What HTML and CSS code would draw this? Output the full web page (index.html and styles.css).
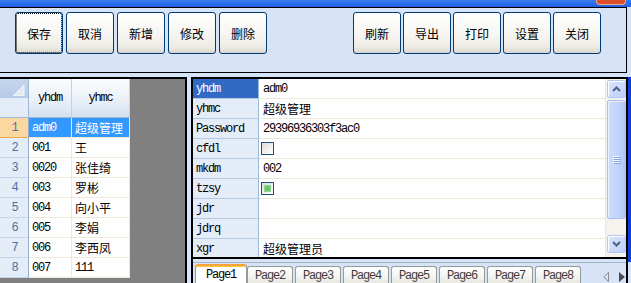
FILE: index.html
```html
<!DOCTYPE html>
<html>
<head>
<meta charset="utf-8">
<link rel="stylesheet" href="styles.css">
</head>
<body>
<div class="title"><div class="close"></div></div>
<div class="toolbar">
  <div class="group">
    <button class="btn focus">保存</button>
    <button class="btn">取消</button>
    <button class="btn">新增</button>
    <button class="btn">修改</button>
    <button class="btn">删除</button>
  </div>
  <div class="group r">
    <button class="btn">刷新</button>
    <button class="btn">导出</button>
    <button class="btn">打印</button>
    <button class="btn">设置</button>
    <button class="btn">关闭</button>
  </div>
</div>
<div class="lower">
  <div class="grid">
    <div class="table">
      <div class="hdr">
        <div class="corner">
          <div class="c1"><svg class="tri" width="12" height="11" viewBox="0 0 12 11"><polygon points="11,0 11,11 0,11" fill="#e3e9f1" stroke="#f4f7fb" stroke-width="1"/></svg></div>
          <div class="c2"></div>
        </div>
        <div class="hcell w1 m">yhdm</div>
        <div class="hcell w2 m">yhmc</div>
      </div>
      <div class="row sel"><div class="rh m">1</div><div class="cell w1 m">adm0</div><div class="cell w2">超级管理</div></div>
      <div class="row"><div class="rh m">2</div><div class="cell w1 m">001</div><div class="cell w2">王</div></div>
      <div class="row"><div class="rh m">3</div><div class="cell w1 m">0020</div><div class="cell w2">张佳绮</div></div>
      <div class="row"><div class="rh m">4</div><div class="cell w1 m">003</div><div class="cell w2">罗彬</div></div>
      <div class="row"><div class="rh m">5</div><div class="cell w1 m">004</div><div class="cell w2">向小平</div></div>
      <div class="row"><div class="rh m">6</div><div class="cell w1 m">005</div><div class="cell w2">李娟</div></div>
      <div class="row"><div class="rh m">7</div><div class="cell w1 m">006</div><div class="cell w2">李西凤</div></div>
      <div class="row"><div class="rh m">8</div><div class="cell w1 m">007</div><div class="cell w2 m">111</div></div>
    </div>
  </div>
  <div class="right">
    <div class="pgrid">
      <div class="props">
        <div class="prow"><div class="plab sel m">yhdm</div><div class="pval m">adm0</div></div>
        <div class="prow"><div class="plab m">yhmc</div><div class="pval">超级管理</div></div>
        <div class="prow"><div class="plab m">Password</div><div class="pval m">29396936303f3ac0</div></div>
        <div class="prow"><div class="plab m">cfdl</div><div class="pval"><span class="chk"></span></div></div>
        <div class="prow"><div class="plab m">mkdm</div><div class="pval m">002</div></div>
        <div class="prow"><div class="plab m">tzsy</div><div class="pval"><span class="chk on"><span class="dot"></span></span></div></div>
        <div class="prow"><div class="plab m">jdr</div><div class="pval"></div></div>
        <div class="prow"><div class="plab m">jdrq</div><div class="pval"></div></div>
        <div class="prow"><div class="plab m">xgr</div><div class="pval">超级管理员</div></div>
      </div>
      <div class="vscroll">
        <div class="sbtn"><svg width="9" height="6" viewBox="0 0 9 6"><polyline points="1,5 4.5,1.5 8,5" fill="none" stroke="#4d6185" stroke-width="2"/></svg></div>
        <div class="thumb"><svg width="8" height="8" viewBox="0 0 8 8"><g fill="#eef3fe"><rect x="0" y="0" width="7" height="1"/><rect x="0" y="2" width="7" height="1"/><rect x="0" y="4" width="7" height="1"/><rect x="0" y="6" width="7" height="1"/></g><g fill="#8aa6e0"><rect x="1" y="1" width="7" height="1"/><rect x="1" y="3" width="7" height="1"/><rect x="1" y="5" width="7" height="1"/><rect x="1" y="7" width="7" height="1"/></g></svg></div>
        <div class="track"></div>
        <div class="sbtn"><svg width="9" height="6" viewBox="0 0 9 6"><polyline points="1,1 4.5,4.5 8,1" fill="none" stroke="#4d6185" stroke-width="2"/></svg></div>
      </div>
    </div>
    <div class="tabs">
      <div class="tab active m">Page1</div>
      <div class="tab m">Page2</div>
      <div class="tab m">Page3</div>
      <div class="tab m">Page4</div>
      <div class="tab m">Page5</div>
      <div class="tab m">Page6</div>
      <div class="tab m">Page7</div>
      <div class="tab m">Page8</div>
      <div class="arrows">
        <svg width="6" height="10" viewBox="0 0 6 10"><polygon points="5.5,0.5 0.8,5 5.5,9.5" fill="none" stroke="#8a8a8a" stroke-width="1"/></svg>
        <svg width="6" height="10" viewBox="0 0 6 10"><polygon points="0,0 6,5 0,10" fill="#4a4a4a"/></svg>
      </div>
    </div>
  </div>
  <div class="edge"></div>
</div>
</body>
</html>
```
FILE: styles.css
```css
* { box-sizing: border-box; }
html, body { margin: 0; padding: 0; }
body {
  width: 631px;
  height: 283px;
  overflow: hidden;
  background: #d7e4f7;
  font-family: "Noto Sans CJK SC", sans-serif;
  font-size: 12px;
  color: #000;
}
.m {
  font-family: "Liberation Mono", "Noto Sans CJK SC", monospace;
  letter-spacing: -1.2px;
}
.title {
  height: 7px;
  background: linear-gradient(#3b7cf0, #1f5fe2);
  display: flex;
  justify-content: flex-end;
}
.close {
  width: 30px;
  height: 5px;
  margin-right: 5px;
  background: #d9502a;
  border: 1px solid #f0a58c;
  border-top: none;
  border-radius: 0 0 4px 4px;
}
.toolbar {
  width: 627px;
  height: 66px;
  border: 1px solid #000;
  border-left: none;
  display: flex;
  justify-content: space-between;
  align-items: flex-start;
  padding: 4px 25px 0 15px;
}
.group { display: flex; gap: 3px; }
.group.r { gap: 2px; }
.btn {
  width: 48px;
  height: 42px;
  border: 1px solid #003c74;
  border-radius: 3px;
  background: linear-gradient(#ffffff 0%, #f6f5f1 55%, #ecebe5 85%, #d9d6cc 100%);
  font-family: "Noto Sans CJK SC", sans-serif;
  font-size: 12px;
  color: #000;
  padding: 0;
  display: flex;
  align-items: center;
  justify-content: center;
}
.btn.focus { outline: 1px dotted #000; outline-offset: -2px; }

.lower { display: flex; margin-top: 4px; height: 206px; }
.grid {
  width: 187px;
  height: 206px;
  border-top: 2px solid #000;
  border-right: 2px solid #000;
  background: #808080;
}
.table { width: 130px; background: #fff; }
.hdr { display: flex; height: 39px; }
.corner {
  width: 29px;
  display: flex;
  flex-direction: column;
  border-right: 1px solid #9db9d9;
  border-bottom: 1px solid #9db9d9;
}
.c1 {
  height: 19px;
  background: linear-gradient(#c6d7ee, #b5cae6);
  display: flex;
  justify-content: flex-end;
  align-items: flex-end;
  padding: 0 3px 2px 0;
}
.c2 { flex: 1; background: #e4ecf7; }
.hcell {
  display: flex;
  align-items: center;
  justify-content: center;
  background: linear-gradient(#fbfcfe, #eef3f9 45%, #d6e1ef);
  border-right: 1px solid #c3d1e3;
  border-bottom: 1px solid #9db9d9;
}
.w1 { width: 43px; }
.w2 { width: 58px; }
.row { display: flex; height: 20px; }
.rh {
  width: 29px;
  background: #e4ecf7;
  border-right: 1px solid #8eaed6;
  border-bottom: 1px solid #c5d5ea;
  color: #4d70a8;
  display: flex;
  align-items: center;
  justify-content: center;
  padding-left: 1px;
}
.row.sel .rh { background: #fbd8a0; border-bottom-color: #f0a64a; }
.cell {
  background: #fff;
  border-right: 1px solid #ece9d8;
  border-bottom: 1px solid #ece9d8;
  padding-left: 3px;
  display: flex;
  align-items: center;
  white-space: nowrap;
  overflow: hidden;
}
.row.sel .cell { background: #3399ff; color: #fff; }

.right {
  width: 437px;
  margin-left: 4px;
  border: 2px solid #000;
  border-bottom: none;
  display: flex;
  flex-direction: column;
}
.pgrid {
  display: flex;
  height: 180px;
  border-bottom: 2px solid #000;
}
.props { width: 412px; height: 178px; overflow: hidden; background: #fff; }
.prow { display: flex; height: 20px; flex-shrink: 0; }
.plab {
  width: 66px;
  background: #e4ecf7;
  border-right: 1px solid #9db9d9;
  border-bottom: 1px solid #b4c8e2;
  padding-left: 3px;
  display: flex;
  align-items: center;
}
.plab.sel { background: #316ac5; color: #fff; }
.pval {
  flex: 1;
  border-bottom: 1px solid #ece9d8;
  padding-left: 4px;
  display: flex;
  align-items: center;
  white-space: nowrap;
}
.chk {
  width: 13px;
  height: 13px;
  margin-left: -2px;
  border: 1px solid #1c5180;
  background: linear-gradient(135deg, #dcdcd7, #ffffff);
  display: flex;
  align-items: center;
  justify-content: center;
}
.dot { width: 7px; height: 7px; background: #70c470; border: 1px solid #8fd68d; }

.vscroll {
  width: 21px;
  background: #f4f3ee;
  border-left: 1px solid #ece9d8;
  padding: 1px 0 4px 1px;
  display: flex;
  flex-direction: column;
}
.sbtn {
  width: 19px;
  height: 18px;
  flex-shrink: 0;
  border: 1px solid #b4c8f4;
  border-radius: 2px;
  background: linear-gradient(135deg, #dbe6fe, #bccffb);
  box-shadow: inset 1px 1px 0 #fff;
  display: flex;
  align-items: center;
  justify-content: center;
}
.thumb {
  width: 19px;
  height: 119px;
  margin-top: 2px;
  flex-shrink: 0;
  border: 1px solid #a9bff0;
  border-radius: 2px;
  background: linear-gradient(90deg, #cfdcfd, #c1d3fb 60%, #b1c7f6);
  box-shadow: inset 1px 1px 0 #eaf0fe;
  display: flex;
  align-items: center;
  justify-content: center;
}
.track { flex: 1; }

.tabs {
  flex: 1;
  margin-top: 3px;
  border-top: 1px solid #a6b4c6;
  display: flex;
  align-items: flex-start;
  padding: 1px 0 0 2px;
}
.tab {
  width: 46px;
  height: 18px;
  margin-top: 2px;
  margin-left: 2px;
  border: 1px solid #919b9c;
  border-bottom: none;
  border-radius: 3px 3px 0 0;
  background: linear-gradient(#ffffff, #f3f3ef 60%, #e6e5de);
  color: #3c3c3c;
  display: flex;
  align-items: center;
  justify-content: center;
}
.tab.active {
  width: 52px;
  height: 20px;
  margin-top: 0;
  margin-left: 0;
  margin-right: -2px;
  background: #fff;
  color: #000;
  border-top: 2px solid #f4a43a;
  box-shadow: inset 0 1px 0 #ffc83c;
  position: relative;
  z-index: 1;
}
.arrows {
  margin-left: auto;
  margin-top: 8px;
  display: flex;
  gap: 10px;
  padding-right: 1px;
}
.edge { width: 3px; height: 185px; background: #0b3fd8; }
```
